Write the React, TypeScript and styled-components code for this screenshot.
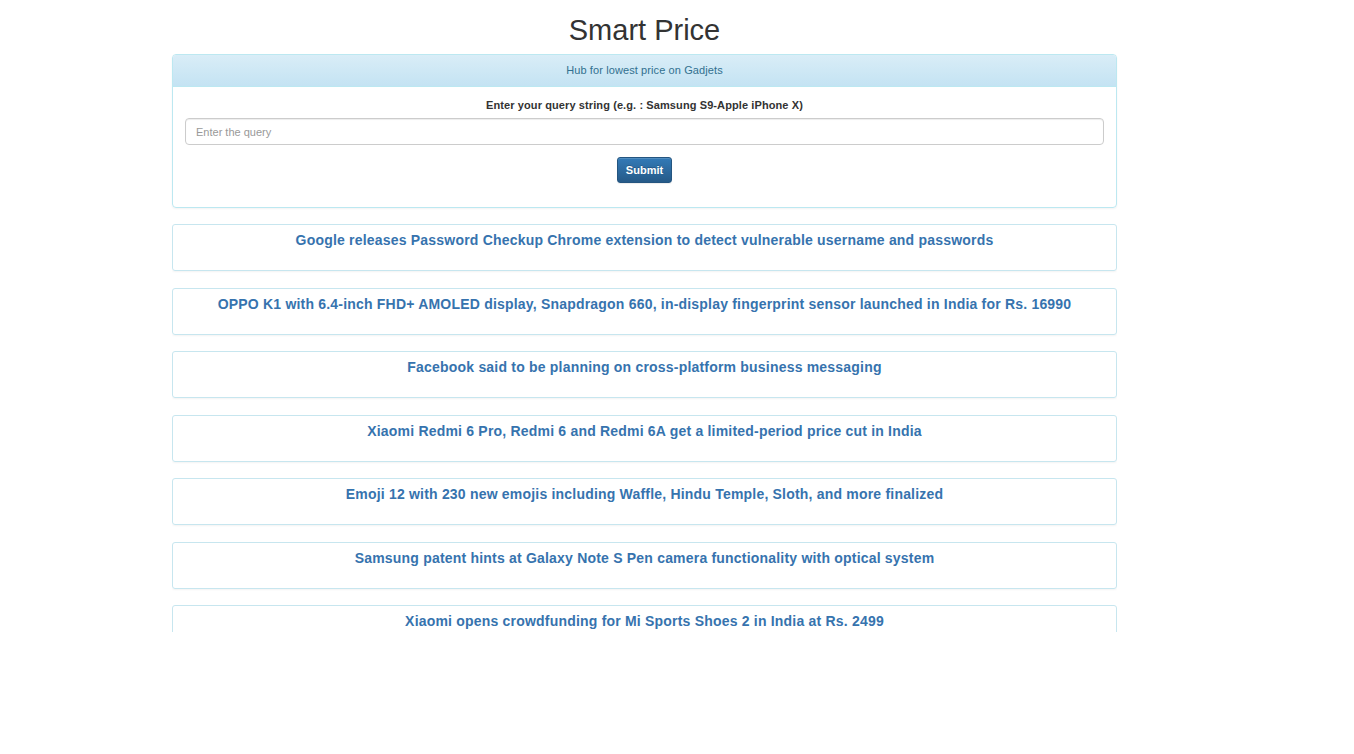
import React from "react";
import styled, { createGlobalStyle } from "styled-components";

const GlobalStyle = createGlobalStyle`
  html, body { margin: 0; padding: 0; background: #fff; }
  body { font-family: "Liberation Sans", Arial, Helvetica, sans-serif; color: #333; }
  * { box-sizing: border-box; }
`;

const Page = styled.div`
  width: 945px;
  margin-left: 172px;
  display: flex;
  flex-direction: column;
`;

const Title = styled.h1`
  margin: 0;
  padding-top: 12px;
  height: 54px;
  font-size: 29px;
  font-weight: 400;
  line-height: 36px;
  text-align: center;
  color: #333;
`;

const Panel = styled.section`
  border: 1px solid #bce8f1;
  border-radius: 4px;
  box-shadow: 0 1px 2px rgba(0, 0, 0, 0.05);
  overflow: hidden;
  height: 154px;
`;

const PanelHeading = styled.div`
  height: 32px;
  padding-bottom: 1px;
  display: flex;
  align-items: center;
  justify-content: center;
  background: linear-gradient(to bottom, #d9edf7 0%, #c4e3f3 100%);
  border-bottom: 1px solid #bce8f1;
  color: #31708f;
  font-size: 11px;
  letter-spacing: 0.1px;
`;

const PanelBody = styled.form`
  display: flex;
  flex-direction: column;
  align-items: center;
  padding: 11px 12px 0;
`;

const Label = styled.label`
  font-size: 11px;
  font-weight: 700;
  color: #333;
  line-height: 14px;
  letter-spacing: 0.1px;
  margin-bottom: 6px;
`;

const Input = styled.input`
  width: 100%;
  height: 27px;
  border: 1px solid #ccc;
  border-radius: 4px;
  padding: 0 10px;
  font-family: inherit;
  font-size: 11px;
  color: #555;
  box-shadow: inset 0 1px 1px rgba(0, 0, 0, 0.075);
  margin-bottom: 12px;
  &::placeholder { color: #999; }
`;

const Button = styled.button`
  width: 55px;
  height: 26px;
  border: 1px solid #245580;
  border-radius: 3px;
  background: linear-gradient(to bottom, #337ab7 0%, #265a88 100%);
  color: #fff;
  font-family: inherit;
  font-size: 11px;
  font-weight: 700;
  text-shadow: 0 -1px 0 rgba(0, 0, 0, 0.2);
  box-shadow: inset 0 1px 0 rgba(255, 255, 255, 0.15), 0 1px 1px rgba(0, 0, 0, 0.075);
  padding: 0;
  cursor: pointer;
`;

const NewsList = styled.div`
  margin-top: 16px;
  height: 408px;
  overflow: hidden;
  display: flex;
  flex-direction: column;
  gap: 16.5px;
`;

const NewsCard = styled.a`
  display: block;
  flex: 0 0 47px;
  border: 1px solid #c7e6ef;
  border-radius: 3px;
  box-shadow: 0 1px 2px rgba(0, 0, 0, 0.05);
  padding-top: 6px;
  text-align: center;
  font-size: 14px;
  font-weight: 700;
  line-height: 18px;
  color: #3673ae;
  text-decoration: none;
  letter-spacing: 0.2px;
`;

const news = [
  "Google releases Password Checkup Chrome extension to detect vulnerable username and passwords",
  "OPPO K1 with 6.4-inch FHD+ AMOLED display, Snapdragon 660, in-display fingerprint sensor launched in India for Rs. 16990",
  "Facebook said to be planning on cross-platform business messaging",
  "Xiaomi Redmi 6 Pro, Redmi 6 and Redmi 6A get a limited-period price cut in India",
  "Emoji 12 with 230 new emojis including Waffle, Hindu Temple, Sloth, and more finalized",
  "Samsung patent hints at Galaxy Note S Pen camera functionality with optical system",
  "Xiaomi opens crowdfunding for Mi Sports Shoes 2 in India at Rs. 2499",
];

export default function App() {
  return (
    <>
      <GlobalStyle />
      <Page>
        <Title>Smart Price</Title>
        <Panel>
          <PanelHeading>Hub for lowest price on Gadjets</PanelHeading>
          <PanelBody onSubmit={(e) => e.preventDefault()}>
            <Label htmlFor="q">Enter your query string (e.g. : Samsung S9-Apple iPhone X)</Label>
            <Input id="q" placeholder="Enter the query" />
            <Button type="submit">Submit</Button>
          </PanelBody>
        </Panel>
        <NewsList>
          {news.map((n) => (
            <NewsCard key={n} href="#">
              {n}
            </NewsCard>
          ))}
        </NewsList>
      </Page>
    </>
  );
}
